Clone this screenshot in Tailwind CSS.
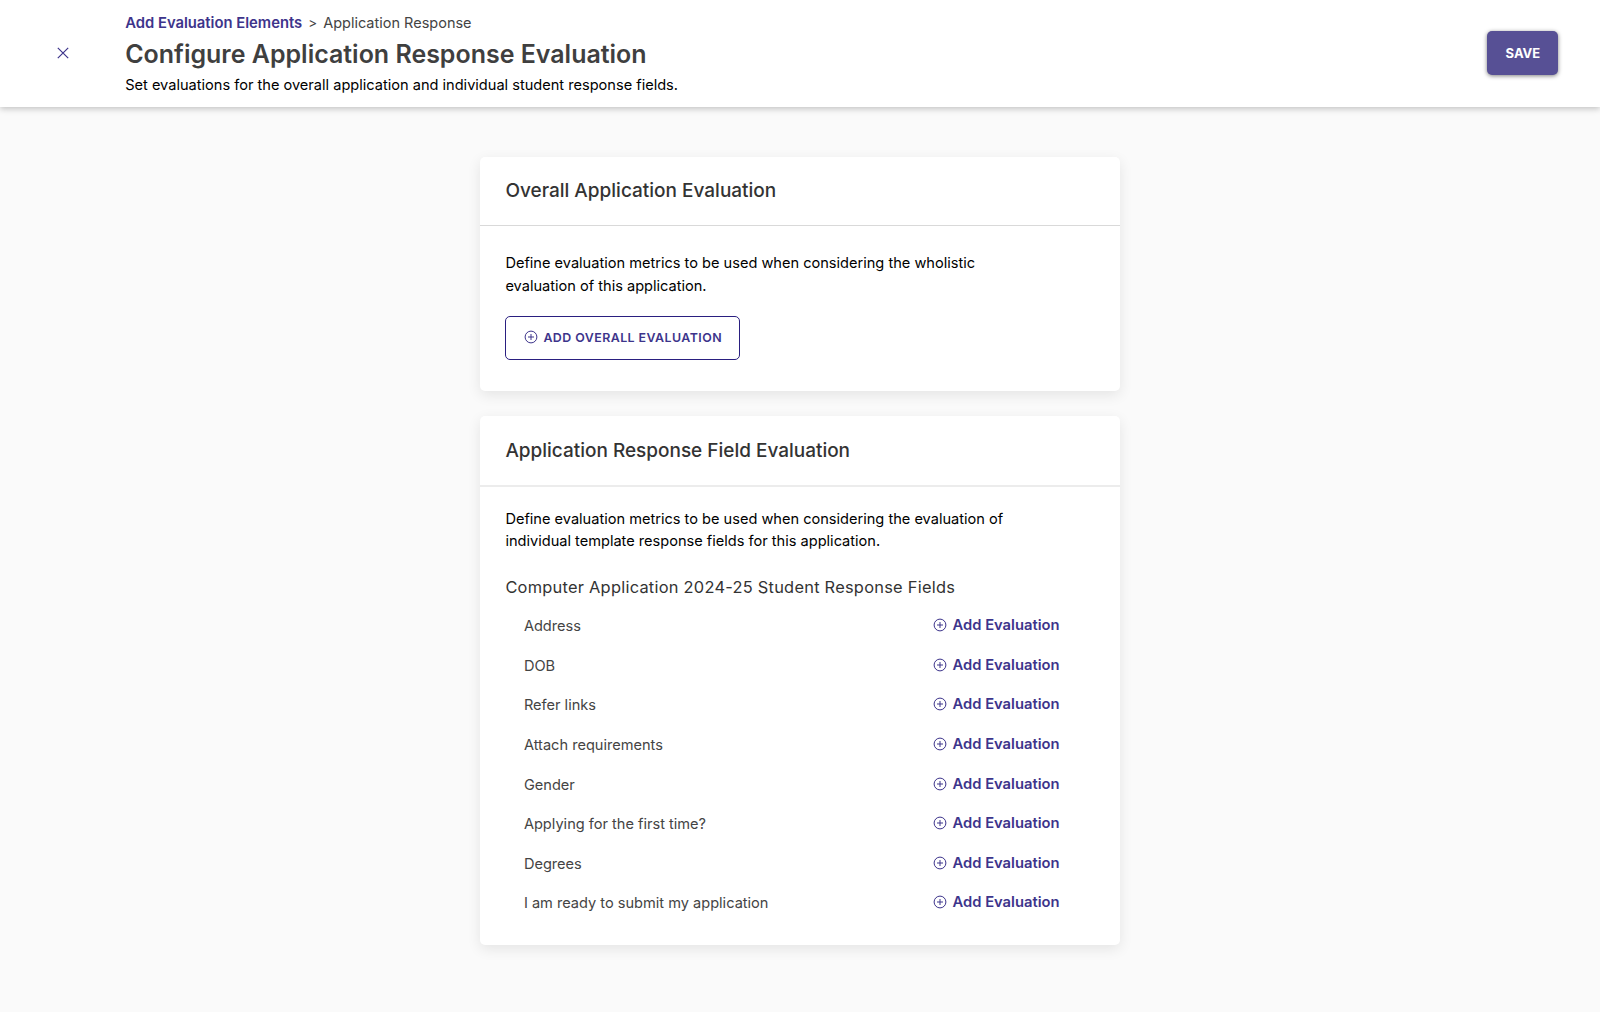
<!DOCTYPE html>
<html lang="en">
  <head>
    <meta charset="UTF-8" />
    <title>Configure Application Response Evaluation</title>
    <script src="https://cdn.jsdelivr.net/npm/@tailwindcss/browser@4"></script>
  </head>
  <body class="min-h-screen bg-[#fafafa] font-[Inter,sans-serif] text-[14.58px] text-black">
    <svg class="hidden">
      <symbol id="plus-circle" viewBox="0 0 14 14">
        <circle cx="7" cy="7" r="5.9" fill="none" stroke="currentColor" stroke-width="1" />
        <path d="M7 4v6M4 7h6" stroke="currentColor" stroke-width="1" />
      </symbol>
    </svg>

    <header class="relative flex h-[107px] bg-white pr-[41.6px] shadow-[0_2px_6px_rgba(0,0,0,0.22)]">
      <button class="flex h-[105px] w-[125.2px] items-center justify-center text-[#3d348b]" aria-label="Close">
        <svg class="size-3" viewBox="0 0 12 12" fill="none" stroke="currentColor" stroke-width="1.2">
          <path d="M.8.8l10.4 10.4M11.2.8.8 11.2" />
        </svg>
      </button>
      <div class="flex-1 pt-[11px]">
        <div class="flex h-6 items-center">
          <a href="#" class="pt-px text-[14.8px] font-semibold text-[#3d348b]">Add Evaluation Elements</a>
          <span class="px-1.5 text-[13.5px] text-[#444]">&gt;</span>
          <span class="text-[14.5px] text-[#444]">Application Response</span>
        </div>
        <h1 class="h-[38px] text-[24.97px] leading-[38px] font-semibold text-[#3f3f3f]">Configure Application Response Evaluation</h1>
        <p class="h-6 leading-6">Set evaluations for the overall application and individual student response fields.</p>
      </div>
      <button class="mt-[31px] h-11 w-[71px] rounded-[5px] bg-[#575095] pt-0.5 text-[13px] font-bold text-white shadow-[0_1px_4px_rgba(0,0,0,0.5)]">SAVE</button>
    </header>

    <main class="mx-auto flex w-[640px] flex-col gap-[25px] pt-[50px]">
      <section class="h-[234px] rounded-[5px] bg-white shadow-[0_4px_14px_rgba(0,0,0,0.09)]">
        <h2 class="h-[69px] border-b border-[#d9d9d9] px-[25.4px] text-[19px] leading-[68px] font-medium text-[#333]">Overall Application Evaluation</h2>
        <div class="px-[25.4px] pt-[26px]">
          <p class="w-[510px] leading-[23.2px]">
            Define evaluation metrics to be used when considering the wholistic evaluation of this application.
          </p>
          <button class="mt-[17.4px] flex h-11 w-[235px] items-center rounded-[5px] border border-[#2a1f80] pl-[18px] text-[#3d348b]">
            <svg class="mb-px size-3.5"><use href="#plus-circle" /></svg>
            <span class="pt-px pl-[5px] text-[12.4px] font-semibold tracking-[0.45px]">ADD OVERALL EVALUATION</span>
          </button>
        </div>
      </section>

      <section class="h-[529px] rounded-[5px] bg-white shadow-[0_4px_14px_rgba(0,0,0,0.09)]">
        <h2 class="h-[71px] border-b-2 border-[#ececec] px-[25.4px] text-[18.98px] leading-[70px] font-medium text-[#333]">Application Response Field Evaluation</h2>
        <div class="px-[25.4px] pt-[21px]">
          <p class="w-[510px] leading-[22.4px]">
            Define evaluation metrics to be used when considering the evaluation of individual template response fields for this application.
          </p>
          <h3 class="mt-[22.4px] text-[16.4px] leading-6 tracking-[0.25px] text-[#333]">Computer Application 2024-25 Student Response Fields</h3>
          <ul id="fields" class="pt-[15px] pr-[34.6px] pl-[18.5px]"></ul>
        </div>
      </section>
    </main>

    <template id="field">
      <li class="flex h-[39.6px] items-start justify-between">
        <span class="pt-px leading-[22px] text-[#444]"></span>
        <button class="flex items-center text-[#3d348b]">
          <svg class="size-3.5"><use href="#plus-circle" /></svg>
          <span class="ml-[5.5px] w-[107.5px] text-left text-[14.75px] leading-[22px] font-semibold whitespace-nowrap">Add Evaluation</span>
        </button>
      </li>
    </template>

    <script>
      const fields = [
        'Address',
        'DOB',
        'Refer links',
        'Attach requirements',
        'Gender',
        'Applying for the first time?',
        'Degrees',
        'I am ready to submit my application',
      ]
      const template = document.querySelector('#field')
      fields.forEach((name) => {
        const row = template.content.cloneNode(true)
        row.querySelector('span').textContent = name
        document.querySelector('#fields').append(row)
      })
    </script>
  </body>
</html>
